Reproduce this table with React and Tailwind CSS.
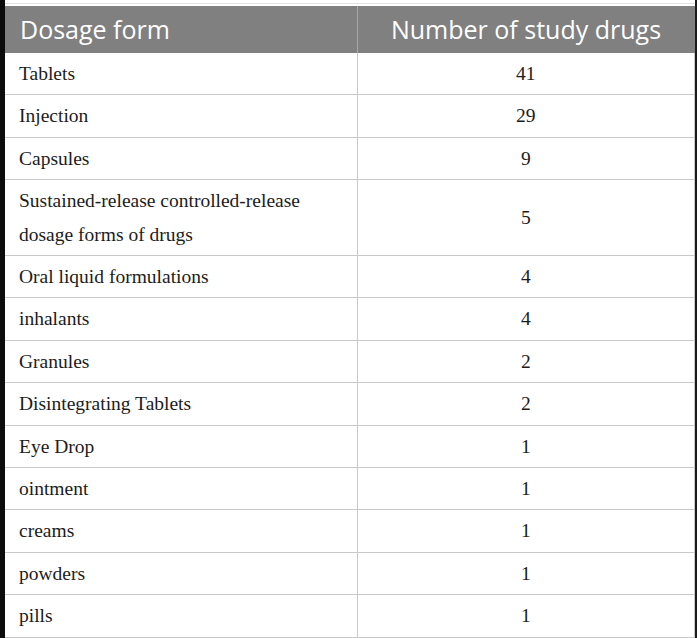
import React from 'react';

const rows = [
  ['Tablets', '41'],
  ['Injection', '29'],
  ['Capsules', '9'],
  ['Sustained-release controlled-release dosage forms of drugs', '5'],
  ['Oral liquid formulations', '4'],
  ['inhalants', '4'],
  ['Granules', '2'],
  ['Disintegrating Tablets', '2'],
  ['Eye Drop', '1'],
  ['ointment', '1'],
  ['creams', '1'],
  ['powders', '1'],
  ['pills', '1'],
];

const App = () => {
  return (
    <div className="flex w-[697px] h-[638px] bg-white overflow-hidden">
      <div className="w-[5px] bg-[#0c0c0c] shrink-0" />
      <div className="w-[690px] shrink-0">
        <div className="h-[3px]" />
        <div className="h-px bg-[#e2e2e2]" />
        <div className="h-[2px]" />
        <table className="w-full border-collapse table-fixed">
          <colgroup>
            <col className="w-[352px]" />
            <col />
          </colgroup>
          <thead>
            <tr className="bg-[#7f807f] text-white font-['Open_Sans',sans-serif] text-[25px]">
              <th className="h-[47px] px-[15px] text-left font-normal leading-none border-r border-[#a8a8a8]">
                Dosage form
              </th>
              <th className="h-[47px] px-[15px] text-center font-normal leading-none">
                Number of study drugs
              </th>
            </tr>
          </thead>
          <tbody className="font-['Liberation_Serif',serif] text-[19.5px] text-[#1c1c1c]">
            {rows.map(([form, n]) => (
              <tr key={form} className="border-b border-[#c9c9c9]">
                <td className="pl-[14px] pr-[30px] py-[4px] leading-[33.4px] border-r border-[#c9c9c9]">
                  {form}
                </td>
                <td className="py-[4px] leading-[33.4px] text-center border-r border-[#c9c9c9]">{n}</td>
              </tr>
            ))}
          </tbody>
        </table>
      </div>
      <div className="w-[2px] bg-[#1a1a1a] shrink-0" />
    </div>
  );
};

export default App;
